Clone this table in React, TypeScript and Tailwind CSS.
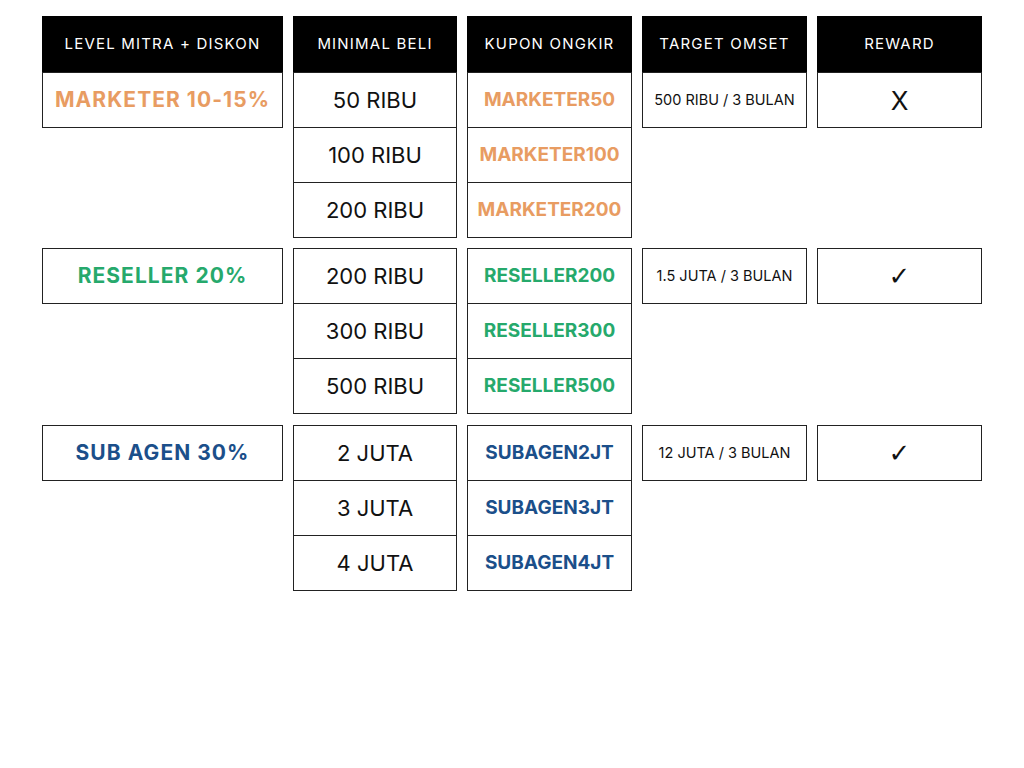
import React from "react";

const headers = ["LEVEL MITRA + DISKON", "MINIMAL BELI", "KUPON ONGKIR", "TARGET OMSET", "REWARD"];

const groups = [
  {
    level: "MARKETER 10-15%",
    color: "text-[#e89c62]",
    mins: ["50 RIBU", "100 RIBU", "200 RIBU"],
    coupons: ["MARKETER50", "MARKETER100", "MARKETER200"],
    target: "500 RIBU / 3 BULAN",
    reward: "X",
    space: "",
  },
  {
    level: "RESELLER 20%",
    color: "text-[#26a96c]",
    mins: ["200 RIBU", "300 RIBU", "500 RIBU"],
    coupons: ["RESELLER200", "RESELLER300", "RESELLER500"],
    target: "1.5 JUTA / 3 BULAN",
    reward: "✓",
    space: "mt-[10px]",
  },
  {
    level: "SUB AGEN 30%",
    color: "text-[#1b4f8a]",
    mins: ["2 JUTA", "3 JUTA", "4 JUTA"],
    coupons: ["SUBAGEN2JT", "SUBAGEN3JT", "SUBAGEN4JT"],
    target: "12 JUTA / 3 BULAN",
    reward: "✓",
    space: "mt-[11px]",
  },
];

const widths = ["w-[241px]", "w-[164px]", "w-[165px]", "w-[165px]", "w-[165px]"];

function Cell({ children, className = "", idx = 0 }: any) {
  // stacked rows share their borders
  return (
    <div
      className={`h-[56px] border border-[#222] bg-white flex items-center justify-center ${idx > 0 ? "-mt-px" : ""} ${className}`}
    >
      {children}
    </div>
  );
}

export default function App() {
  return (
    <div className="w-[1024px] h-[768px] bg-white pt-4 pl-[42px] font-['Inter','Liberation_Sans',sans-serif] text-[#111]">
      <div className="flex gap-[10px]">
        {headers.map((h, i) => (
          <div
            key={h}
            className={`${widths[i]} h-[56px] bg-black text-white flex items-center justify-center text-[15px] tracking-[0.08em]`}
          >
            {h}
          </div>
        ))}
      </div>
      <div className="flex flex-col">
        {groups.map((g) => (
          <div key={g.level} className={`flex gap-[10px] items-start ${g.space}`}>
            <div className={widths[0]}>
              <Cell className={`text-[21px] font-bold tracking-[0.05em] ${g.color}`}>{g.level}</Cell>
            </div>
            <div className={`${widths[1]} flex flex-col`}>
              {g.mins.map((m, i) => (
                <Cell key={m} idx={i} className="text-[22px]">
                  {m}
                </Cell>
              ))}
            </div>
            <div className={`${widths[2]} flex flex-col`}>
              {g.coupons.map((c, i) => (
                <Cell key={c} idx={i} className={`text-[19px] font-bold ${g.color}`}>
                  {c}
                </Cell>
              ))}
            </div>
            <div className={widths[3]}>
              <Cell className="text-[14.5px]">{g.target}</Cell>
            </div>
            <div className={widths[4]}>
              <Cell className="text-[26px] font-['DejaVu_Sans','Liberation_Sans',sans-serif]">
                {g.reward === "X" ? <span className="font-['Inter',sans-serif]">X</span> : g.reward}
              </Cell>
            </div>
          </div>
        ))}
      </div>
    </div>
  );
}
